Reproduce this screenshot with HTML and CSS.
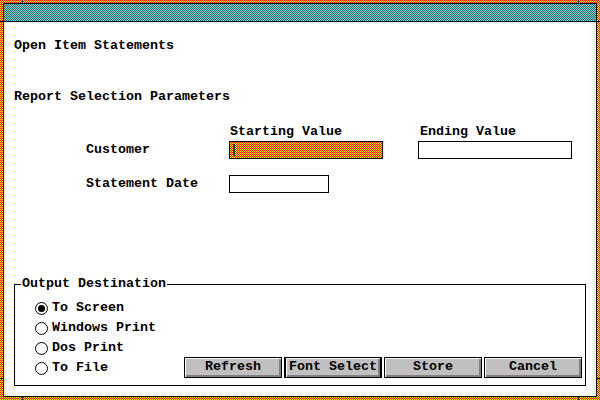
FILE: index.html
```html
<!DOCTYPE html>
<html>
<head>
<meta charset="utf-8">
<link rel="stylesheet" href="styles.css">
</head>
<body>
<div class="window">
  <span class="tick tick-t1"></span><span class="tick tick-t2"></span>
  <span class="tick tick-b1"></span><span class="tick tick-b2"></span>
  <span class="tick tick-l1"></span><span class="tick tick-l2"></span>
  <span class="tick tick-r1"></span><span class="tick tick-r2"></span>
  <div class="frame">
    <div class="titlebar"></div>
    <div class="content">
      <div class="title">Open Item Statements</div>
      <div class="section">Report Selection Parameters</div>
      <div class="params">
        <div class="row row-head">
          <div class="label"></div>
          <div class="cell">Starting Value</div>
          <div class="cell">Ending Value</div>
        </div>
        <div class="row row-cust">
          <div class="label">Customer</div>
          <div class="cell"><div class="field field-wide field-active"><span class="caret"></span></div></div>
          <div class="cell"><div class="field field-wide"></div></div>
        </div>
        <div class="row row-date">
          <div class="label">Statement Date</div>
          <div class="cell"><div class="field field-short"></div></div>
        </div>
      </div>
      <fieldset class="group">
        <legend class="group-title">Output Destination</legend>
        <div class="group-body">
          <div class="radios">
            <div class="radio"><span class="dot checked"></span><span class="rlabel">To Screen</span></div>
            <div class="radio"><span class="dot"></span><span class="rlabel">Windows Print</span></div>
            <div class="radio"><span class="dot"></span><span class="rlabel">Dos Print</span></div>
            <div class="radio"><span class="dot"></span><span class="rlabel">To File</span></div>
          </div>
          <div class="buttons">
            <div class="btn">Refresh</div>
            <div class="btn btn-default">Font Select</div>
            <div class="btn">Store</div>
            <div class="btn">Cancel</div>
          </div>
        </div>
      </fieldset>
    </div>
  </div>
</div>
</body>
</html>
```
FILE: styles.css
```css
html, body {
  margin: 0;
  padding: 0;
  background: #fff;
}
body {
  font-family: "Liberation Mono", "DejaVu Sans Mono", monospace;
  font-weight: bold;
  font-size: 13.33px;
  line-height: 16px;
  color: #000;
}
.window {
  position: relative;
  width: 600px;
  height: 400px;
  box-sizing: border-box;
  padding: 3px;
  background-image: url("data:image/svg+xml,%3Csvg xmlns='http://www.w3.org/2000/svg' width='2' height='2' shape-rendering='crispEdges'%3E%3Crect width='2' height='2' fill='%23ffff00'/%3E%3Crect width='1' height='1' fill='%23ff0000'/%3E%3Crect x='1' y='1' width='1' height='1' fill='%23ff0000'/%3E%3C/svg%3E");
  background-size: 2px 2px;
}
.tick {
  position: absolute;
  background: #000;
}
.tick-t1, .tick-t2, .tick-b1, .tick-b2 { width: 1px; height: 3px; }
.tick-l1, .tick-l2, .tick-r1, .tick-r2 { width: 3px; height: 1px; }
.tick-t1 { left: 22px; top: 0; }
.tick-t2 { left: 578px; top: 0; }
.tick-b1 { left: 22px; bottom: 0; }
.tick-b2 { left: 578px; bottom: 0; }
.tick-l1 { left: 0; top: 21px; }
.tick-l2 { left: 0; top: 378px; }
.tick-r1 { right: 0; top: 21px; }
.tick-r2 { right: 0; top: 378px; }
.frame {
  height: 100%;
  box-sizing: border-box;
  border: 1px solid #000;
  background: #fff;
  display: flex;
  flex-direction: column;
}
.titlebar {
  height: 17px;
  border-bottom: 1px solid #000;
  background-image: url("data:image/svg+xml,%3Csvg xmlns='http://www.w3.org/2000/svg' width='2' height='2' shape-rendering='crispEdges'%3E%3Crect width='2' height='2' fill='%23a8b8b8'/%3E%3Crect width='1' height='1' fill='%23008080'/%3E%3Crect x='1' y='1' width='1' height='1' fill='%23008080'/%3E%3C/svg%3E");
  background-size: 2px 2px;
}
.content {
  flex: 1;
  padding: 16px 0 0 10px;
  display: flex;
  flex-direction: column;
  align-items: flex-start;
}
.title {
  height: 16px;
}
.section {
  margin-top: 35px;
  height: 16px;
}
.params {
  margin-top: 19px;
  margin-left: 72px;
}
.row {
  display: flex;
  align-items: center;
}
.row-head { height: 16px; }
.row-cust { margin-top: 1px; height: 18px; }
.row-date { margin-top: 16px; height: 18px; }
.label { width: 143px; }
.cell { width: 189px; display: flex; }
.row-head .cell { padding-left: 1px; }
.field {
  box-sizing: border-box;
  height: 18px;
  border: 1px solid #000;
  background: #fff;
  position: relative;
}
.field-wide { width: 154px; }
.field-short { width: 100px; }
.field-active {
  background-image: url("data:image/svg+xml,%3Csvg xmlns='http://www.w3.org/2000/svg' width='2' height='2' shape-rendering='crispEdges'%3E%3Crect width='2' height='2' fill='%23ffff00'/%3E%3Crect width='1' height='1' fill='%23ff0000'/%3E%3Crect x='1' y='1' width='1' height='1' fill='%23ff0000'/%3E%3C/svg%3E");
  background-size: 2px 2px;
}
.caret {
  position: absolute;
  left: 3px;
  top: 2px;
  width: 2px;
  height: 12px;
  background: #004848;
}
.group {
  margin: 83px 0 0 0;
  width: 572px;
  box-sizing: border-box;
  border: 1px solid #000;
  padding: 6px 3px 7px 20px;
  min-width: 0;
}
.group-title {
  margin-left: -14px;
  padding: 0 1px;
  line-height: 16px;
}
.group-body {
  display: flex;
  align-items: flex-end;
}
.radios {
  display: flex;
  flex-direction: column;
}
.radio {
  height: 20px;
  display: flex;
  align-items: center;
}
.dot {
  box-sizing: border-box;
  width: 13px;
  height: 13px;
  border: 1px solid #000;
  border-radius: 50%;
  background: #fff;
  position: relative;
}
.dot.checked::after {
  content: "";
  position: absolute;
  left: 2px;
  top: 2px;
  width: 7px;
  height: 7px;
  border-radius: 50%;
  background: #000;
}
.rlabel {
  margin-left: 4px;
}
.buttons {
  margin-left: auto;
  display: flex;
  gap: 2px;
}
.btn {
  box-sizing: border-box;
  width: 98px;
  height: 21px;
  border: 1px solid #000;
  background: #c0c0c0;
  box-shadow: inset 1px 1px 0 #fff, inset -2px -2px 0 #808080;
  display: flex;
  align-items: center;
  justify-content: center;
  padding-bottom: 1px;
}
.btn-default {
  box-shadow: inset 1px 0 0 #000, inset -1px 0 0 #000, inset 2px 1px 0 #fff, inset -3px -2px 0 #808080;
}
```
